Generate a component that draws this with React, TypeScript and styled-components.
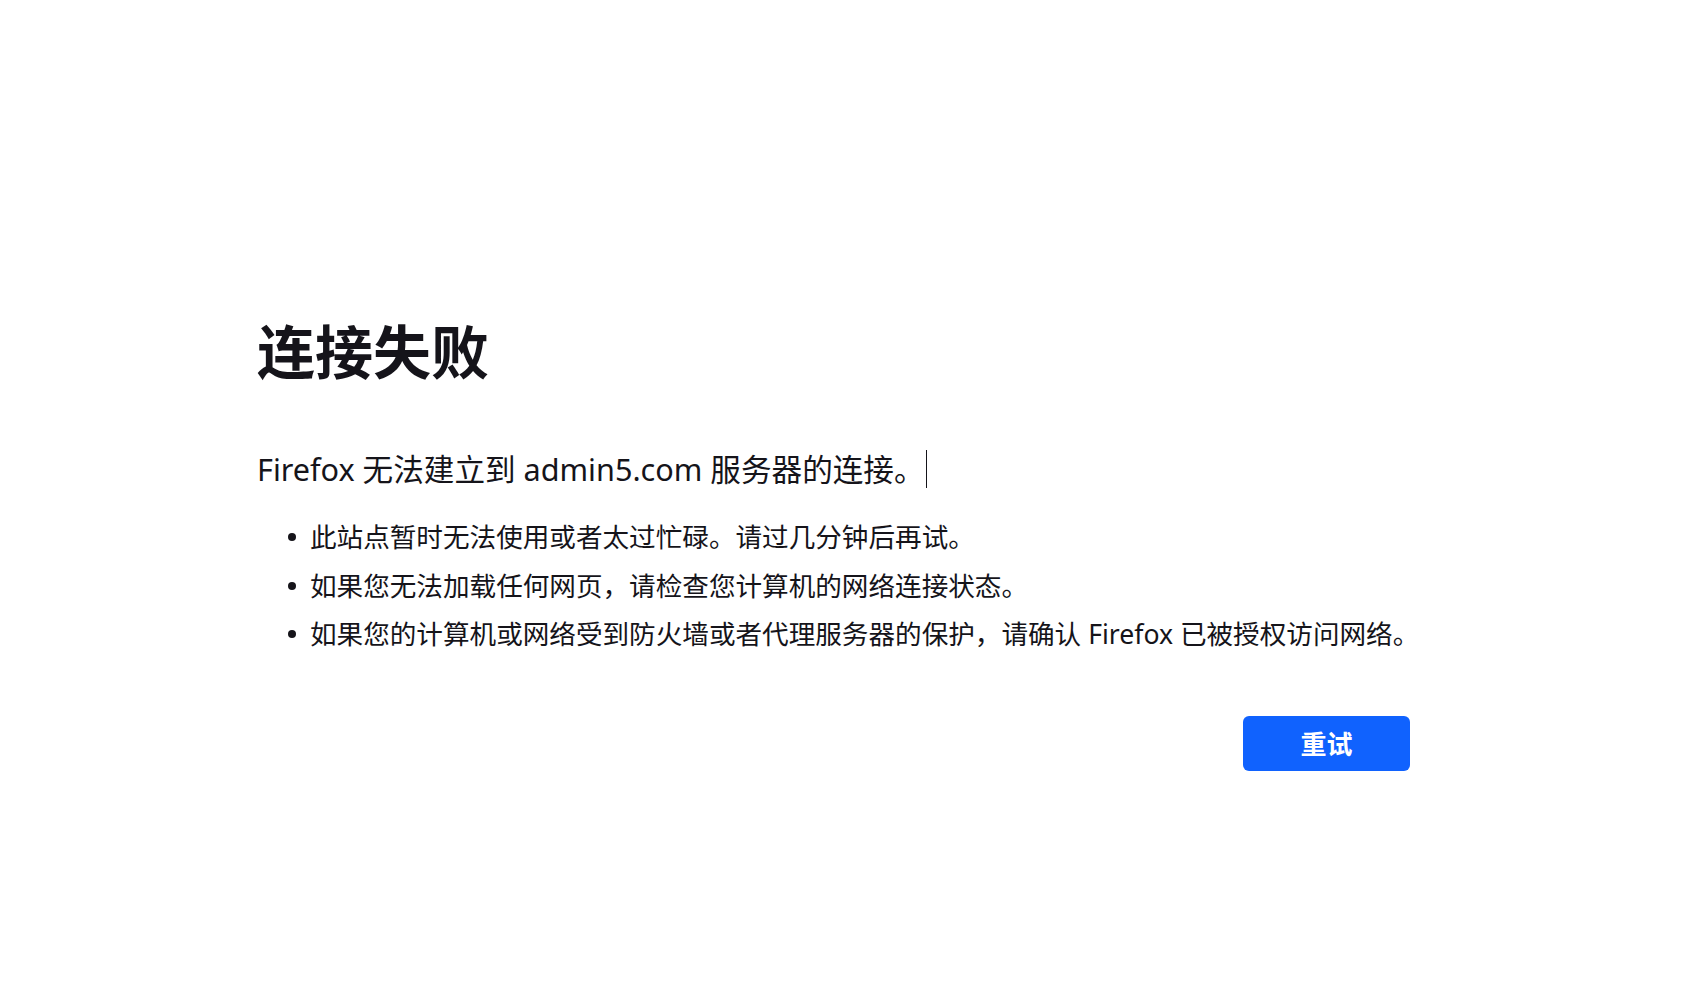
import { FunctionComponent } from "react";
import styled, { createGlobalStyle } from "styled-components";

const GlobalStyle = createGlobalStyle`
  html, body {
    margin: 0;
    padding: 0;
    background: #ffffff;
  }
  body {
    font-family: "Noto Sans", "Noto Sans CJK SC", sans-serif;
    color: #15141a;
  }
`;

const Page = styled.main`
  min-height: 996px;
  box-sizing: border-box;
  padding: 317px 0 0 257px;
`;

const ErrorPanel = styled.section`
  width: 1153px;
  display: flex;
  flex-direction: column;
  align-items: flex-start;
`;

const Title = styled.h1`
  margin: 0;
  font-size: 58px;
  line-height: 70px;
  font-weight: 700;
  color: #15141a;
`;

const ShortDesc = styled.p`
  margin: 62px 0 0;
  font-size: 30.6px;
  line-height: 40px;
  display: flex;
  align-items: center;
  white-space: nowrap;
`;

const Caret = styled.span`
  display: inline-block;
  width: 1.5px;
  height: 38px;
  background: #15141a;
  margin-left: 1px;
`;

const Reasons = styled.ul`
  list-style: none;
  margin: 24px 0 0 31px;
  padding: 0;
`;

const Reason = styled.li`
  display: flex;
  align-items: center;
  font-size: 26.6px;
  line-height: 48.5px;
  white-space: nowrap;
  &::before {
    content: "";
    flex: none;
    width: 8px;
    height: 8px;
    border-radius: 50%;
    background: #15141a;
    margin-right: 14px;
  }
`;

const ButtonRow = styled.div`
  align-self: stretch;
  display: flex;
  justify-content: flex-end;
  margin-top: 57px;
`;

const RetryButton = styled.button`
  width: 167px;
  height: 55px;
  border: none;
  border-radius: 6px;
  background: #1062fe;
  color: #ffffff;
  font-family: "Noto Sans", "Noto Sans CJK SC", sans-serif;
  font-size: 26px;
  font-weight: 700;
  cursor: pointer;
`;

const App: FunctionComponent = () => {
  return (
    <>
      <GlobalStyle />
      <Page>
        <ErrorPanel>
          <Title>连接失败</Title>
          <ShortDesc>
            Firefox 无法建立到 admin5.com 服务器的连接。
            <Caret />
          </ShortDesc>
          <Reasons>
            <Reason>此站点暂时无法使用或者太过忙碌。请过几分钟后再试。</Reason>
            <Reason>如果您无法加载任何网页，请检查您计算机的网络连接状态。</Reason>
            <Reason>
              如果您的计算机或网络受到防火墙或者代理服务器的保护，请确认 Firefox 已被授权访问网络。
            </Reason>
          </Reasons>
          <ButtonRow>
            <RetryButton>重试</RetryButton>
          </ButtonRow>
        </ErrorPanel>
      </Page>
    </>
  );
};

export default App;
